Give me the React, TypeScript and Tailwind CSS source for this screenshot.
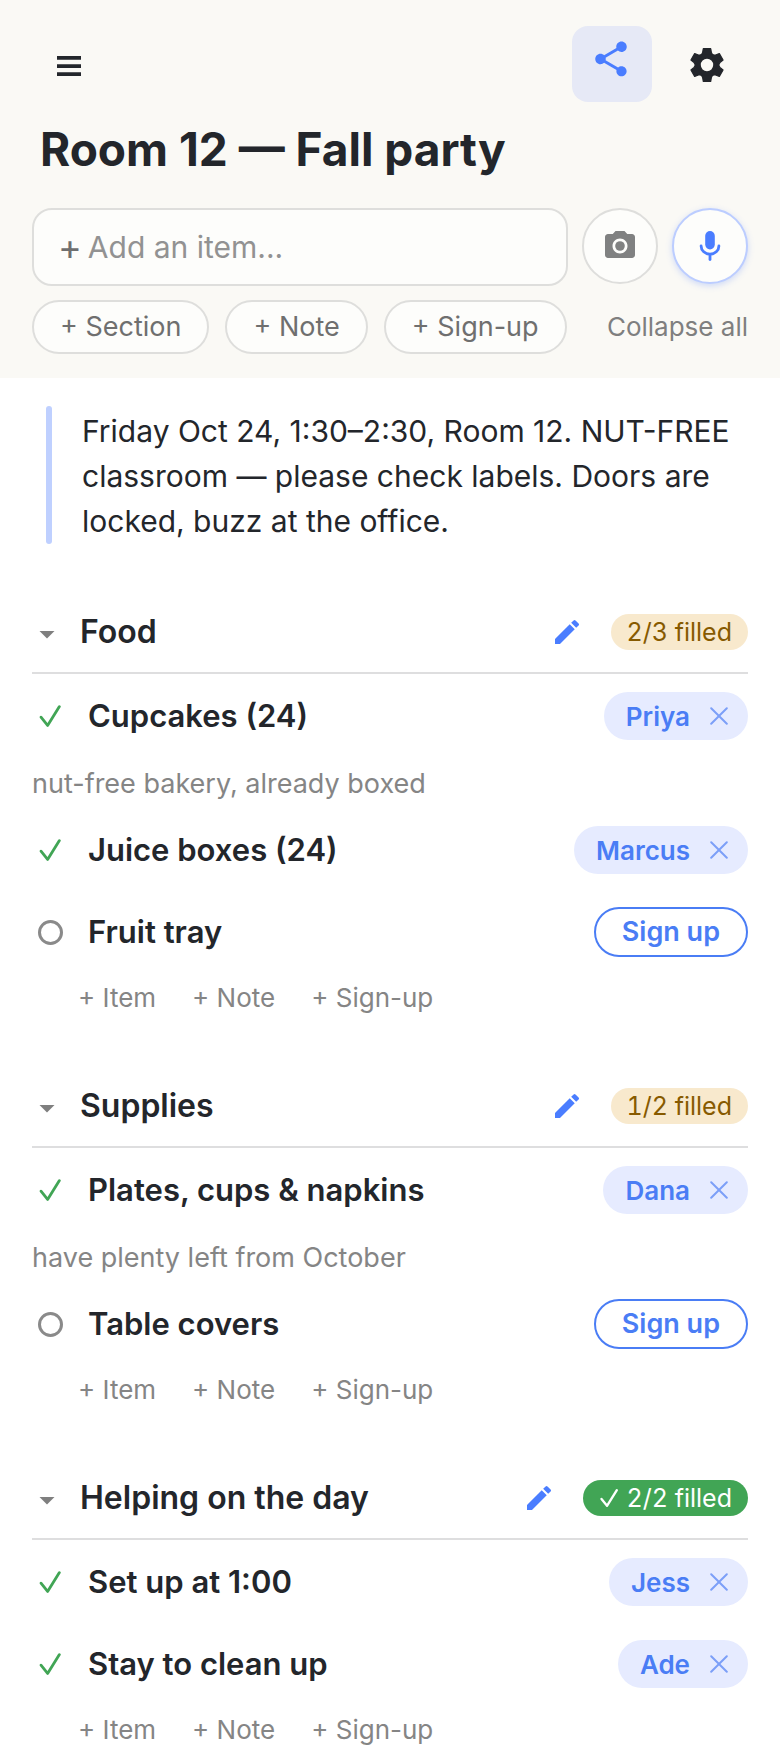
import { MdArrowDropDown, MdEdit, MdPhotoCamera, MdShare } from "react-icons/md";

type Slot = {
  name: string;
  person?: string;
  note?: string;
};

type Section = {
  title: string;
  slots: Slot[];
};

const sections: Section[] = [
  {
    title: "Food",
    slots: [
      { name: "Cupcakes (24)", person: "Priya", note: "nut-free bakery, already boxed" },
      { name: "Juice boxes (24)", person: "Marcus" },
      { name: "Fruit tray" },
    ],
  },
  {
    title: "Supplies",
    slots: [
      { name: "Plates, cups & napkins", person: "Dana", note: "have plenty left from October" },
      { name: "Table covers" },
    ],
  },
  {
    title: "Helping on the day",
    slots: [
      { name: "Set up at 1:00", person: "Jess" },
      { name: "Stay to clean up", person: "Ade" },
    ],
  },
];

const CheckIcon: React.FC<{ className?: string }> = ({ className }) => (
  <svg
    viewBox="0 0 24 24"
    fill="none"
    stroke="currentColor"
    strokeWidth="2.8"
    strokeLinecap="round"
    strokeLinejoin="round"
    className={className}
    aria-hidden="true"
  >
    <path d="M3 13.2 9.6 21.4 21.4 2.6" />
  </svg>
);

const MicIcon: React.FC = () => (
  <svg viewBox="0 0 24 32" className="h-8 w-6 text-[#4a7dff]" fill="none" stroke="currentColor" aria-hidden="true">
    <rect x="7.2" y="1" width="9.6" height="18.4" rx="4.8" fill="currentColor" stroke="none" />
    <path d="M3.1 16a8.9 8.2 0 0 0 17.8 0" strokeWidth="2.8" strokeLinecap="round" />
    <path d="M12 24.5V29.6" strokeWidth="2.8" strokeLinecap="round" />
  </svg>
);

// Six teeth, each the same shape turned around the hub
const GearIcon: React.FC = () => (
  <svg viewBox="-18 -18 36 36" className="size-9 text-[#23262b]" aria-hidden="true">
    <circle r="9.3" fill="none" stroke="currentColor" strokeWidth="6.2" />
    {[0, 60, 120, 180, 240, 300].map((angle) => (
      <path
        key={angle}
        d="M-3.7-16.4H3.7L4.4-12.4 5.8-9.6H-5.8L-4.4-12.4Z"
        transform={`rotate(${angle})`}
        fill="currentColor"
        stroke="currentColor"
        strokeWidth="1.2"
        strokeLinejoin="round"
      />
    ))}
  </svg>
);

const Header: React.FC = () => (
  <header className="bg-[#faf9f5] px-8 pt-[26px] pb-6">
    <div className="flex items-center gap-4">
      <button type="button" aria-label="Menu" className="grid h-[76px] w-[74px] place-items-center pt-1">
        <svg viewBox="0 0 24 20" className="h-5 w-6 fill-[#23262b]" aria-hidden="true">
          <path d="M0 0h24v3.8H0zM0 8.2h24v3.8H0zM0 16.2h24v3.8H0z" />
        </svg>
      </button>
      <button
        type="button"
        aria-label="Share"
        className="ml-auto grid h-[76px] w-20 place-items-center rounded-2xl bg-[#e6e9f6] pr-0.5 pb-2.5"
      >
        <MdShare className="size-[42px] text-[#4a7dff]" />
      </button>
      <button type="button" aria-label="Settings" className="grid h-[76px] w-20 place-items-center pt-0.5 pr-0.5">
        <GearIcon />
      </button>
    </div>

    <h1 className="mt-3 px-2 text-[46px] leading-[70px] font-bold text-[#23262b]">Room 12 — Fall party</h1>

    <div className="mt-6 flex gap-3.5">
      <div className="flex h-[78px] min-w-0 flex-1 items-center gap-1.5 rounded-[20px] border-2 border-[#dededc] bg-[#fdfdfb] px-6">
        <label htmlFor="add-item" className="text-[36px] text-[#6f6f6f]">
          +
        </label>
        <input
          id="add-item"
          type="text"
          placeholder="Add an item..."
          className="min-w-0 flex-1 bg-transparent text-[30px] text-[#23262b] outline-none placeholder:text-[#929292]"
        />
      </div>
      <button
        type="button"
        aria-label="Add from photo"
        className="grid size-[76px] place-items-center rounded-full border-2 border-[#dededc] bg-[#fdfdfb]"
      >
        <MdPhotoCamera className="size-9 text-[#808181]" />
      </button>
      <button
        type="button"
        aria-label="Dictate"
        className="grid size-[76px] place-items-center rounded-full border-2 border-[#bccdff] bg-[#fdfdfb] shadow-[0_2px_6px_rgba(74,125,255,0.25)]"
      >
        <MicIcon />
      </button>
    </div>

    <div className="mt-3.5 flex items-center gap-4 text-[#6f6f6f]">
      {["Section", "Note", "Sign-up"].map((label) => (
        <button
          key={label}
          type="button"
          className="h-[54px] rounded-full border-2 border-[#dededc] bg-[#fdfdfb] px-[26px] text-[27px] leading-10 whitespace-nowrap"
        >
          + {label}
        </button>
      ))}
      <button type="button" className="ml-auto text-[26px] leading-10 whitespace-nowrap text-[#7f7f7f]">
        Collapse all
      </button>
    </div>
  </header>
);

const SlotRow: React.FC<{ slot: Slot }> = ({ slot }) => (
  <li>
    <div className="flex h-[82px] items-center">
      <label className="flex min-w-0 flex-1 items-center gap-5">
        <span className="grid w-9 place-items-center">
          <input
            type="checkbox"
            defaultChecked={Boolean(slot.person)}
            className="peer col-start-1 row-start-1 size-[25px] appearance-none rounded-full border-3 border-[#8a8a8a] checked:border-0"
          />
          <CheckIcon className="col-start-1 row-start-1 hidden size-6 text-[#41a555] peer-checked:block" />
        </span>
        <span className="truncate text-[31px] leading-[42px] font-semibold text-[#23262b]">{slot.name}</span>
      </label>
      {slot.person ? (
        <div className="flex h-12 items-center gap-5 rounded-full bg-[#e6ebff] pr-5 pl-[22px] text-[26px] font-semibold text-[#4a7df5]">
          {slot.person}
          <button type="button" aria-label={`Remove ${slot.person}`} className="text-[#7c9ff8]">
            <svg viewBox="0 0 18 18" className="size-[18px]" stroke="currentColor" strokeWidth="2" strokeLinecap="round">
              <path d="M1.2 1.2 16.8 16.8M16.8 1.2 1.2 16.8" />
            </svg>
          </button>
        </div>
      ) : (
        <button
          type="button"
          className="h-[50px] rounded-full border-2 border-[#4a7df5] px-[26px] text-[27px] leading-10 font-semibold text-[#4a7df5]"
        >
          Sign up
        </button>
      )}
    </div>
    {slot.note && <p className="h-[52px] text-[27px] leading-[54px] text-[#858585]">{slot.note}</p>}
  </li>
);

const SectionBlock: React.FC<{ section: Section }> = ({ section }) => {
  const total = section.slots.length;
  const filled = section.slots.filter((slot) => slot.person).length;

  return (
    <section>
      <div className="flex h-[82px] items-center border-b-2 border-[#dededf]">
        <button type="button" aria-label={`Collapse ${section.title}`} className="flex w-[30px] justify-center pt-1">
          <MdArrowDropDown className="size-9 shrink-0 text-[#7f7f7f]" />
        </button>
        <h2 className="ml-[18px] flex-1 text-[32px] leading-[42px] font-semibold text-[#23262b]">{section.title}</h2>
        <button type="button" aria-label={`Edit ${section.title}`} className="mr-7">
          <MdEdit className="size-8 text-[#4a7dff]" />
        </button>
        {filled === total ? (
          <span className="flex h-9 items-center gap-2 rounded-full bg-[#41a555] px-4 text-[25px] leading-9 text-white tabular-nums">
            <CheckIcon className="size-5" />
            {filled}/{total} filled
          </span>
        ) : (
          <span className="flex h-9 items-center rounded-full bg-[#f8e9cd] px-4 text-[25px] leading-9 text-[#875a00] tabular-nums">
            {filled}/{total} filled
          </span>
        )}
      </div>
      <ul className="pt-px">
        {section.slots.map((slot) => (
          <SlotRow key={slot.name} slot={slot} />
        ))}
      </ul>
      <div className="flex h-[50px] items-center gap-9 pl-[46px] text-[26px] leading-10 text-[#858585]">
        <button type="button">+ Item</button>
        <button type="button">+ Note</button>
        <button type="button">+ Sign-up</button>
      </div>
    </section>
  );
};

const App: React.FC = () => {
  return (
    <div className="min-h-screen bg-white font-['Inter',sans-serif]">
      <Header />
      <main className="px-8 pt-7">
        <div className="ml-3.5 flex gap-[30px]">
          <div className="w-1.5 shrink-0 rounded-full bg-[#bfd0ff]" />
          <p className="pt-[3px] text-[30px] leading-[45px] text-[#23262b]">
            Friday Oct 24, 1:30–2:30, Room 12. NUT-FREE classroom — please check labels. Doors are locked, buzz at
            the office.
          </p>
        </div>
        <div className="mt-12 flex flex-col gap-[43px]">
          {sections.map((section) => (
            <SectionBlock key={section.title} section={section} />
          ))}
        </div>
      </main>
    </div>
  );
};

export default App;
